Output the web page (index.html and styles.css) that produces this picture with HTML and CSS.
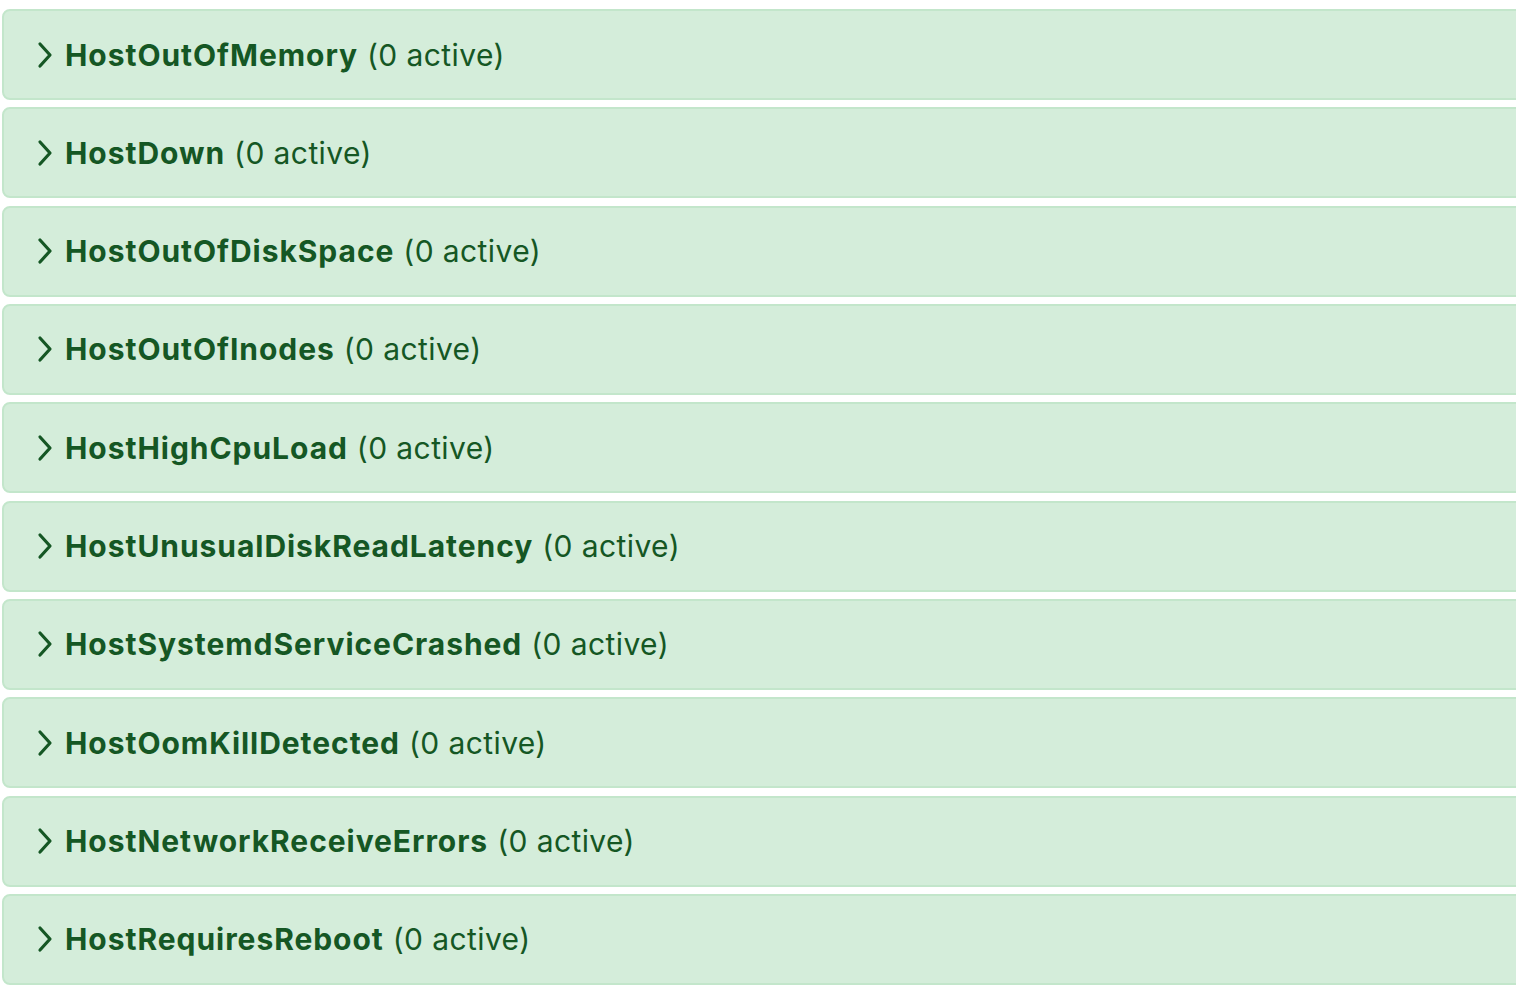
FILE: index.html
```html
<!DOCTYPE html>
<html>
<head>
<meta charset="utf-8">
<link rel="stylesheet" href="styles.css">
</head>
<body>
<div class="list">
  <div class="row"><svg class="chev" viewBox="0 0 16 28"><path d="M3 3 L13 14 L3 25" /></svg><span class="name">HostOutOfMemory</span><span class="count">(0 active)</span></div>
  <div class="row"><svg class="chev" viewBox="0 0 16 28"><path d="M3 3 L13 14 L3 25" /></svg><span class="name">HostDown</span><span class="count">(0 active)</span></div>
  <div class="row"><svg class="chev" viewBox="0 0 16 28"><path d="M3 3 L13 14 L3 25" /></svg><span class="name">HostOutOfDiskSpace</span><span class="count">(0 active)</span></div>
  <div class="row"><svg class="chev" viewBox="0 0 16 28"><path d="M3 3 L13 14 L3 25" /></svg><span class="name">HostOutOfInodes</span><span class="count">(0 active)</span></div>
  <div class="row"><svg class="chev" viewBox="0 0 16 28"><path d="M3 3 L13 14 L3 25" /></svg><span class="name">HostHighCpuLoad</span><span class="count">(0 active)</span></div>
  <div class="row"><svg class="chev" viewBox="0 0 16 28"><path d="M3 3 L13 14 L3 25" /></svg><span class="name">HostUnusualDiskReadLatency</span><span class="count">(0 active)</span></div>
  <div class="row"><svg class="chev" viewBox="0 0 16 28"><path d="M3 3 L13 14 L3 25" /></svg><span class="name">HostSystemdServiceCrashed</span><span class="count">(0 active)</span></div>
  <div class="row"><svg class="chev" viewBox="0 0 16 28"><path d="M3 3 L13 14 L3 25" /></svg><span class="name">HostOomKillDetected</span><span class="count">(0 active)</span></div>
  <div class="row"><svg class="chev" viewBox="0 0 16 28"><path d="M3 3 L13 14 L3 25" /></svg><span class="name">HostNetworkReceiveErrors</span><span class="count">(0 active)</span></div>
  <div class="row"><svg class="chev" viewBox="0 0 16 28"><path d="M3 3 L13 14 L3 25" /></svg><span class="name">HostRequiresReboot</span><span class="count">(0 active)</span></div>
</div>
</body>
</html>
```
FILE: styles.css
```css
html, body {
  margin: 0;
  padding: 0;
  background: #ffffff;
  overflow: hidden;
}
body {
  font-family: Inter, "Noto Sans", "Liberation Sans", sans-serif;
  color: #155724;
}
.list {
  padding: 9px 0 0 2px;
  width: calc(100% + 20px);
  display: flex;
  flex-direction: column;
  gap: 7.33px;
}
.row {
  box-sizing: border-box;
  height: 91px;
  background: #d4edda;
  border: 2px solid #c3e6cb;
  border-radius: 8px;
  display: flex;
  align-items: center;
  padding-left: 33px;
  font-size: 30px;
}
.chev {
  width: 16px;
  height: 28px;
  margin-right: 12px;
  flex: none;
}
.chev path {
  fill: none;
  stroke: #155724;
  stroke-width: 3.2;
  stroke-linecap: round;
  stroke-linejoin: round;
}
.name {
  font-weight: 700;
  letter-spacing: 0.95px;
}
.count {
  margin-left: 9px;
  font-weight: 400;
  letter-spacing: 0.4px;
}
```
